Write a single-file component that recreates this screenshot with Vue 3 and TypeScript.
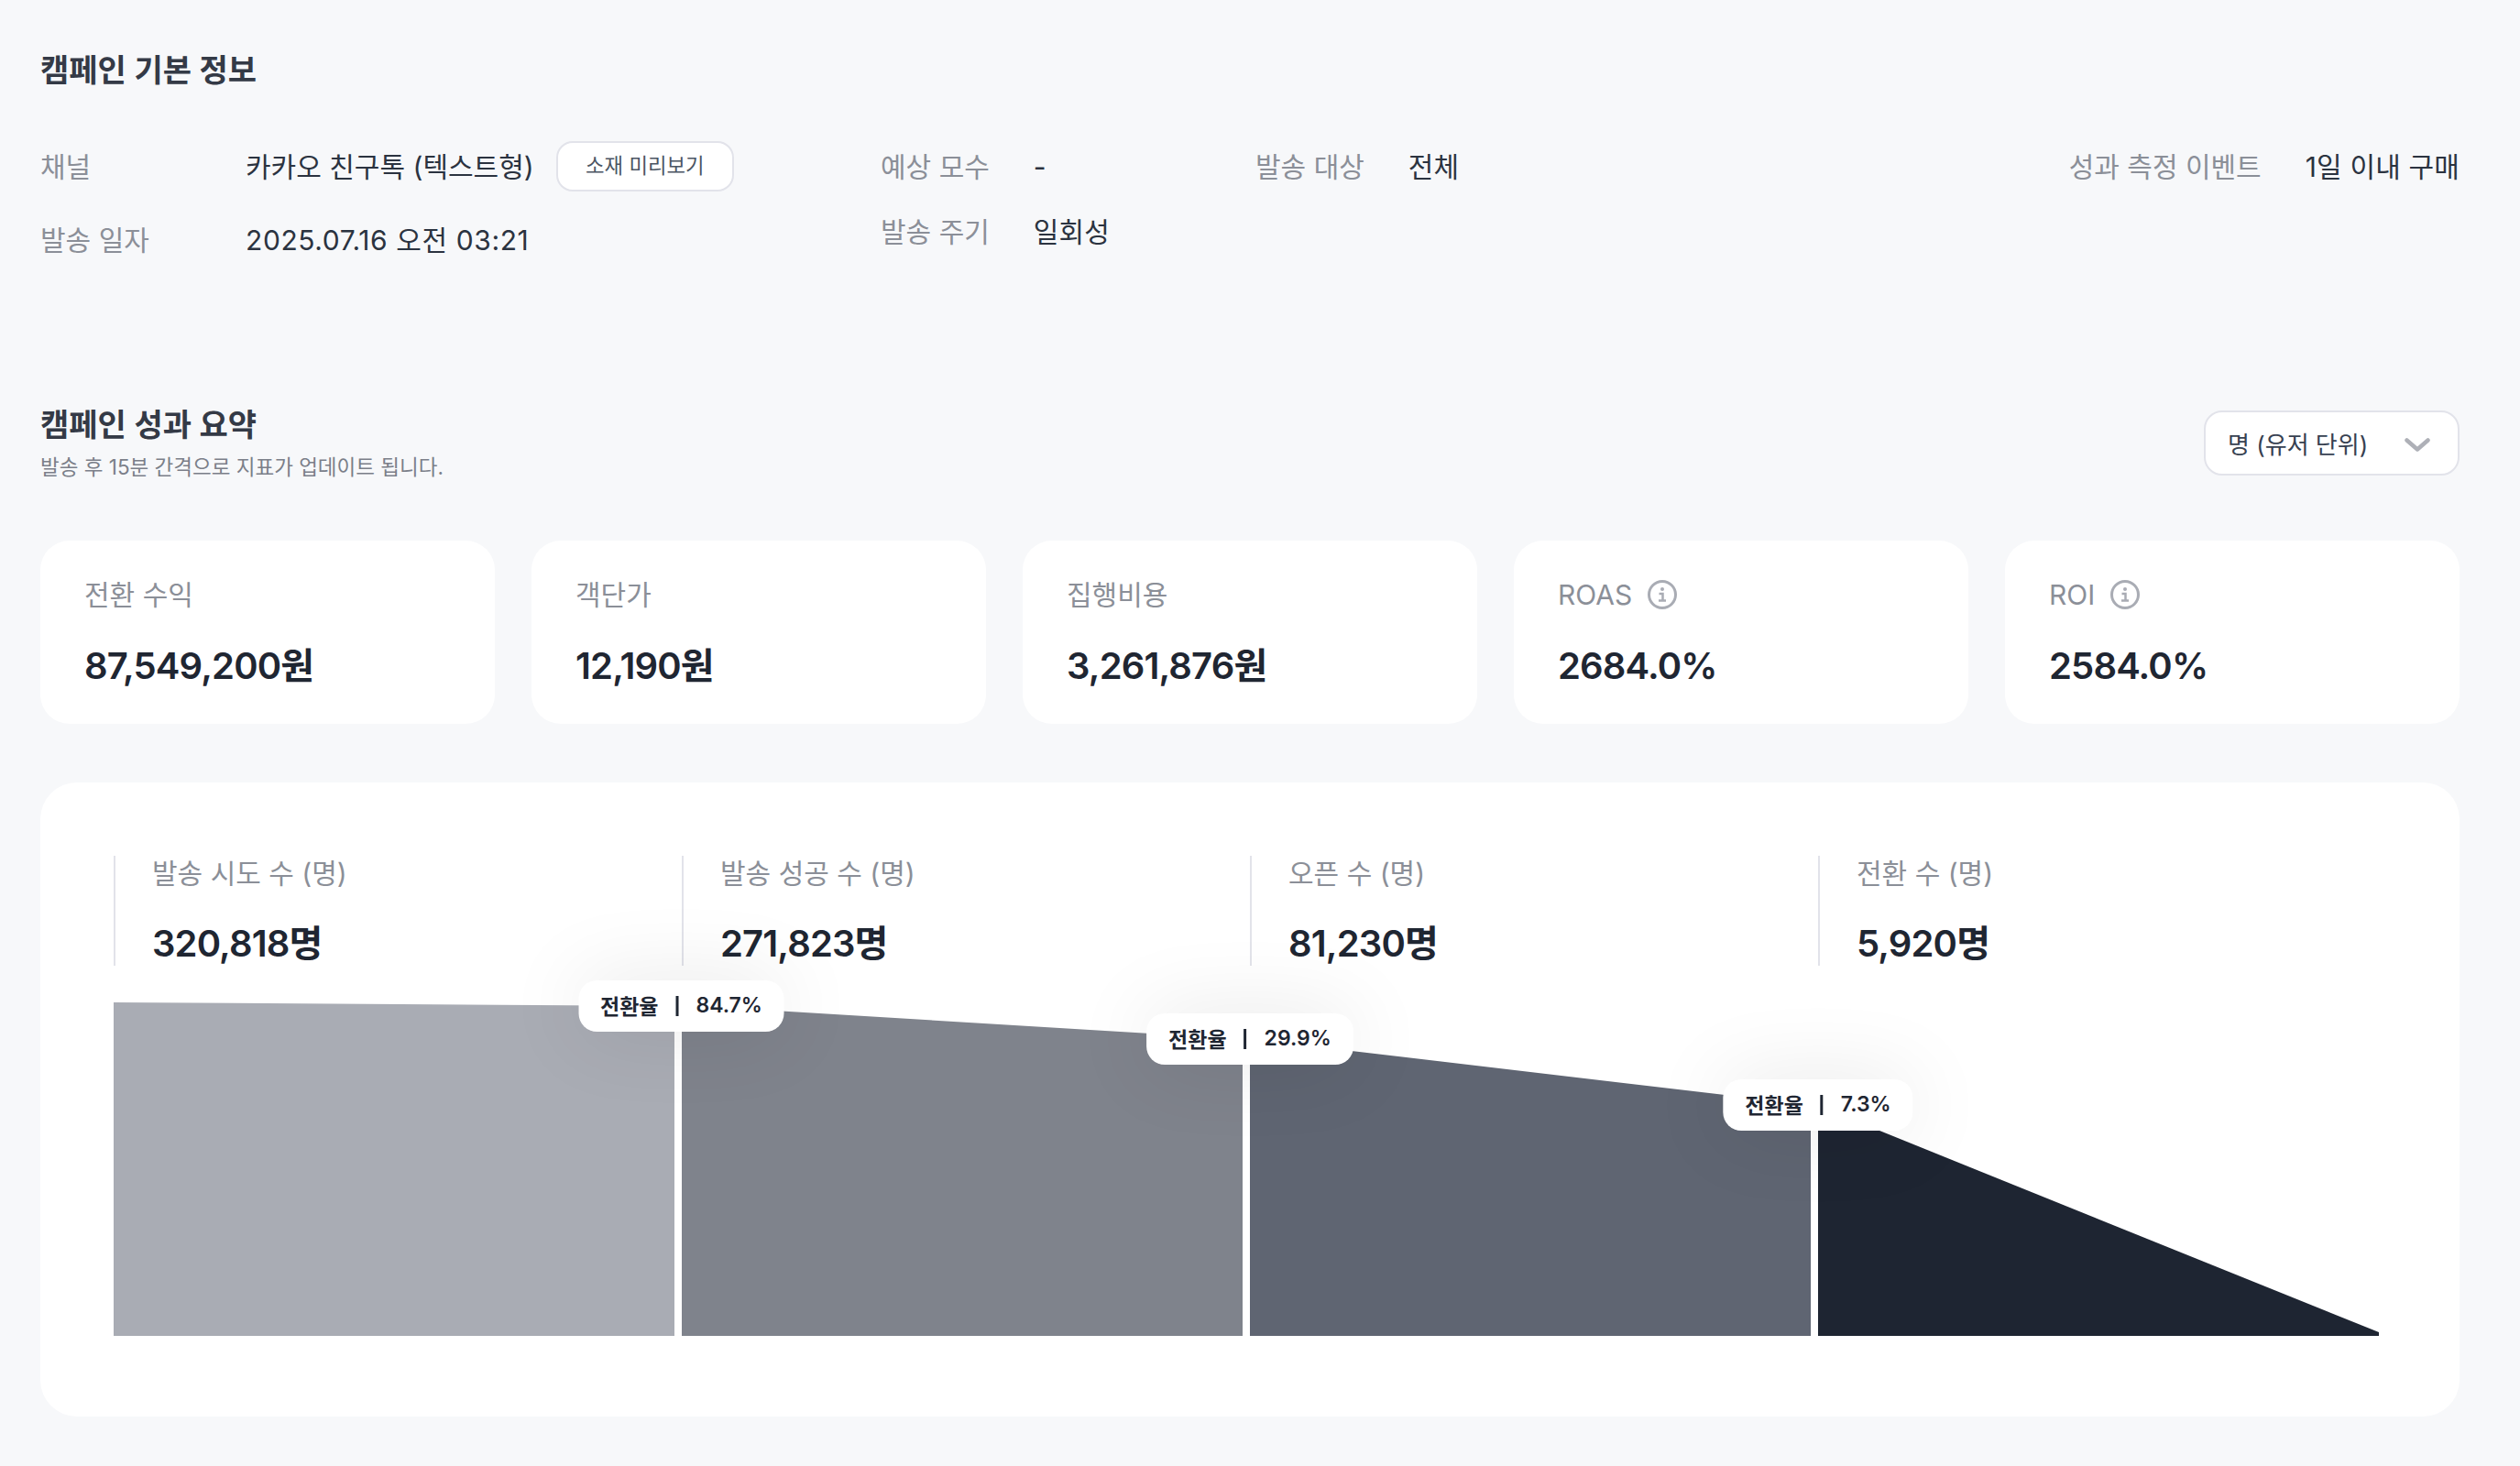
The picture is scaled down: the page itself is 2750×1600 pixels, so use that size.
<script setup lang="ts">
interface Kpi { label: string; value: string; info?: boolean }
interface Stat { label: string; value: string }
interface Badge { text: string; rate: string; x: number; y: number }

const kpis: Kpi[] = [
  { label: '전환 수익', value: '87,549,200원' },
  { label: '객단가', value: '12,190원' },
  { label: '집행비용', value: '3,261,876원' },
  { label: 'ROAS', value: '2684.0%', info: true },
  { label: 'ROI', value: '2584.0%', info: true },
]
const stats: Stat[] = [
  { label: '발송 시도 수 (명)', value: '320,818명' },
  { label: '발송 성공 수 (명)', value: '271,823명' },
  { label: '오픈 수 (명)', value: '81,230명' },
  { label: '전환 수 (명)', value: '5,920명' },
]
const segments = [
  { points: '0,0 612,4 612,364 0,364', fill: '#a9acb4' },
  { points: '620,3 1232,40 1232,364 620,364', fill: '#7f838c' },
  { points: '1240,40 1852,112 1852,364 1240,364', fill: '#5f6572' },
  { points: '1860,113 2472,360 2472,364 1860,364', fill: '#1e2532' },
]
const badges: Badge[] = [
  { text: '전환율', rate: '84.7%', x: 619.5, y: -24 },
  { text: '전환율', rate: '29.9%', x: 1240, y: 12 },
  { text: '전환율', rate: '7.3%', x: 1860, y: 84 },
]
</script>

<template>
  <main class="page">
    <section>
      <h2 class="title">캠페인 기본 정보</h2>
      <div class="info">
        <dl class="col col-a">
          <div class="row tall">
            <dt>채널</dt>
            <dd class="tight">카카오 친구톡 (텍스트형)<button class="preview">소재 미리보기</button></dd>
          </div>
          <div class="row">
            <dt>발송 일자</dt>
            <dd class="date">2025.07.16 오전 03:21</dd>
          </div>
        </dl>
        <dl class="col col-b">
          <div class="row"><dt>예상 모수</dt><dd>-</dd></div>
          <div class="row"><dt>발송 주기</dt><dd>일회성</dd></div>
        </dl>
        <dl class="col col-b">
          <div class="row"><dt>발송 대상</dt><dd>전체</dd></div>
        </dl>
        <dl class="col col-b">
          <div class="row"><dt>성과 측정 이벤트</dt><dd>1일 이내 구매</dd></div>
        </dl>
      </div>
    </section>

    <section class="summary">
      <header class="summary-head">
        <div>
          <h2 class="title">캠페인 성과 요약</h2>
          <p class="sub">발송 후 15분 간격으로 지표가 업데이트 됩니다.</p>
        </div>
        <div class="select">
          <span>명 (유저 단위)</span>
          <svg class="chevron" width="28" height="15" viewBox="0 0 28 15" fill="none">
            <path d="M2.5 2.5 14 12.5 25.5 2.5" stroke="#aeb0b7" stroke-width="4.5" stroke-linecap="round" stroke-linejoin="round" />
          </svg>
        </div>
      </header>

      <div class="kpis">
        <article v-for="k in kpis" :key="k.label" class="kpi">
          <div class="label kpi-label">
            {{ k.label }}
            <svg v-if="k.info" class="info-icon" width="32" height="32" viewBox="0 0 32 32" fill="none">
              <circle cx="16" cy="16" r="14.5" stroke="#a9acb4" stroke-width="3" />
              <circle cx="16" cy="10" r="2" fill="#a9acb4" />
              <path d="M12.5 15h4v7.5M12 22.5h8" stroke="#a9acb4" stroke-width="2.5" />
            </svg>
          </div>
          <div class="value">{{ k.value }}</div>
        </article>
      </div>

      <div class="funnel">
        <div class="stats">
          <div v-for="s in stats" :key="s.label" class="stat">
            <div class="label">{{ s.label }}</div>
            <div class="value">{{ s.value }}</div>
          </div>
        </div>
        <div class="chart">
          <svg width="2472" height="364" viewBox="0 0 2472 364">
            <polygon v-for="s in segments" :key="s.fill" :points="s.points" :fill="s.fill" />
          </svg>
          <div
            v-for="b in badges"
            :key="b.rate"
            class="badge"
            :style="{ left: b.x + 'px', top: b.y + 'px' }"
          >
            <span>{{ b.text }}</span><i class="bar"></i><span>{{ b.rate }}</span>
          </div>
        </div>
      </div>
    </section>
  </main>
</template>

<style>
html, body { background: #f7f8fa; }
</style>

<style scoped>
.page {
  box-sizing: border-box;
  width: 2750px;
  height: 1600px;
  padding: 53px 66px 0 44px;
  background: #f7f8fa;
  font-family: Inter, "Noto Sans CJK KR", sans-serif;
  color: #1f2937;
}
.title {
  margin: 0;
  font-size: 34px;
  line-height: 48px;
  font-weight: 600;
  color: #343a46;
}
.info {
  display: grid;
  grid-template-columns: 917px 409px 1fr auto;
  margin-top: 53px;
}
.col { margin: 0; display: grid; align-content: start; }
.col-a { grid-template-columns: 224px 1fr; row-gap: 31px; }
.col-b { grid-template-columns: auto auto; justify-content: start; column-gap: 48px; row-gap: 27px; padding-top: 6px; }
.row { display: contents; }
dt, dd {
  margin: 0;
  font-size: 30px;
  line-height: 44px;
  display: flex;
  align-items: center;
}
dt { color: #8b8f98; }
dd { color: #2b3340; font-weight: 400; letter-spacing: 0.15px; }
.tight { letter-spacing: 0; }
.date { letter-spacing: 0.6px; }
.tall dt, .tall dd { height: 55px; }
.preview {
  box-sizing: border-box;
  height: 55px;
  width: 194px;
  margin-left: 24px;
  padding: 0;
  border: 2px solid #e2e3ea;
  border-radius: 18px;
  background: #fff;
  font: 400 22.3px/1 Inter, "Noto Sans CJK KR", sans-serif;
  color: #4b5563;
}
.summary { margin-top: 156px; }
.summary-head {
  display: flex;
  justify-content: space-between;
  align-items: center;
}
.sub {
  margin: 4px 0 0;
  font-size: 22.5px;
  line-height: 36px;
  color: #7b7f89;
}
.select {
  box-sizing: border-box;
  width: 279px;
  height: 71px;
  margin-top: -2px;
  padding: 0 30px 0 24px;
  display: flex;
  align-items: center;
  justify-content: space-between;
  background: #fff;
  border: 2px solid #e2e3ea;
  border-radius: 20px;
  font-size: 26px;
  color: #374151;
}
.chevron { margin-top: 4px; }
.kpis {
  display: grid;
  grid-template-columns: repeat(5, 496px);
  column-gap: 40px;
  margin-top: 62px;
}
.kpi {
  box-sizing: border-box;
  height: 200px;
  padding: 37px 48px 0;
  background: #fff;
  border-radius: 32px;
}
.label {
  font-size: 30px;
  line-height: 44px;
  color: #8b8f98;
}
.kpi-label { display: flex; align-items: center; gap: 17px; }
.value {
  margin-top: 32px;
  font-size: 40px;
  line-height: 48px;
  font-weight: 600;
  letter-spacing: -0.85px;
  color: #1f2632;
}
.funnel {
  box-sizing: border-box;
  height: 692px;
  margin-top: 64px;
  padding: 80px;
  background: #fff;
  border-radius: 40px;
}
.stats {
  display: grid;
  grid-template-columns: repeat(4, 620px);
}
.stat {
  box-sizing: border-box;
  height: 120px;
  padding-left: 40px;
  border-left: 2px solid #e2e3ea;
}
.stat .label { margin-top: -3px; }
.stat .value { margin-top: 31px; }
.chart {
  position: relative;
  height: 364px;
  margin-top: 40px;
}
.chart svg { display: block; }
.badge {
  position: absolute;
  transform: translateX(-50%);
  box-sizing: border-box;
  height: 56px;
  padding: 0 24px 2px;
  display: flex;
  align-items: center;
  gap: 19px;
  white-space: nowrap;
  background: #fff;
  border-radius: 20px;
  box-shadow: 0 0 90px rgba(0, 0, 0, 0.1);
  font-size: 23px;
  font-weight: 600;
  color: #1f2632;
}
.bar { width: 3px; height: 22px; background: #1f2632; margin-top: 2px; }
</style>
